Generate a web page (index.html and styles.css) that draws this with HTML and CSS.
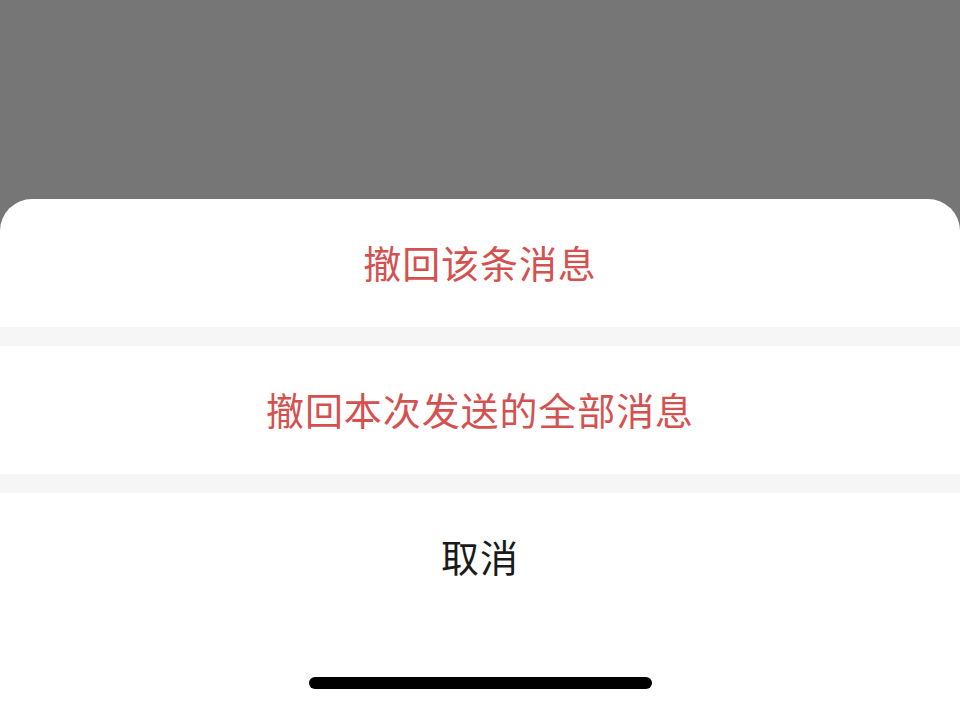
FILE: index.html
```html
<!DOCTYPE html>
<html lang="zh-CN">
<head>
<meta charset="utf-8">
<title>撤回消息</title>
<link rel="stylesheet" href="styles.css">
</head>
<body>
<div class="screen">
  <div class="mask"></div>
  <div class="sheet">
    <div class="item danger">撤回该条消息</div>
    <div class="sep"></div>
    <div class="item danger">撤回本次发送的全部消息</div>
    <div class="sep"></div>
    <div class="item cancel">取消</div>
    <div class="safe"><div class="indicator"></div></div>
  </div>
</div>
</body>
</html>
```
FILE: styles.css
```css
html, body {
  margin: 0;
  padding: 0;
  background: #767676;
}
.screen {
  width: 960px;
  height: 709px;
  display: flex;
  flex-direction: column;
  overflow: hidden;
  font-family: "Noto Sans CJK SC", "Noto Sans", sans-serif;
}
.mask {
  flex: 1;
  background: #767676;
}
.sheet {
  background: #ffffff;
  border-radius: 32px 32px 0 0;
  display: flex;
  flex-direction: column;
}
.item {
  height: 128px;
  display: flex;
  align-items: center;
  justify-content: center;
  font-size: 38px;
  letter-spacing: 0.9px;
  padding-bottom: 4px;
  box-sizing: border-box;
}
.danger {
  color: #d4514f;
}
.cancel {
  height: 130px;
  color: #1a1a1a;
  padding-bottom: 6px;
}
.sep {
  height: 19px;
  background: #f6f6f6;
}
.safe {
  height: 86px;
  display: flex;
  justify-content: center;
  padding-top: 54px;
  box-sizing: border-box;
}
.indicator {
  width: 343px;
  height: 12px;
  border-radius: 6px;
  background: #000;
}
```
